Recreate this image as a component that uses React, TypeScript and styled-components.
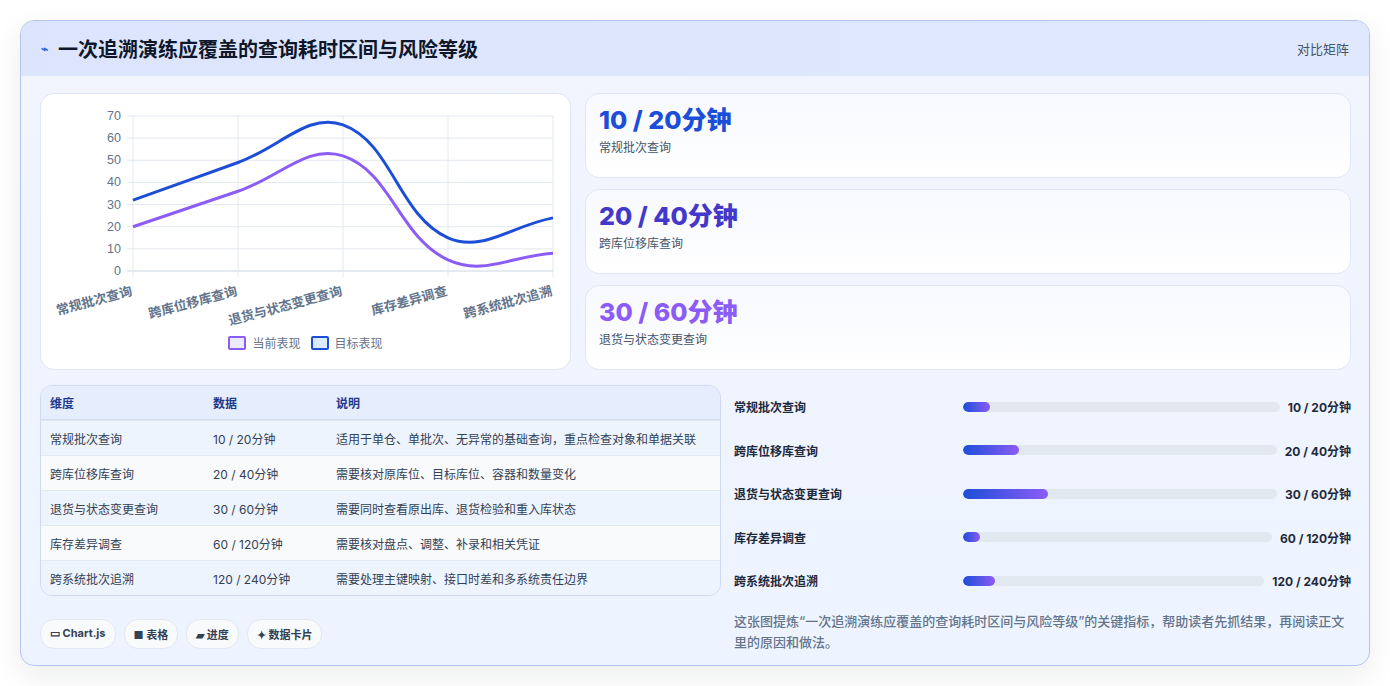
import React from 'react';
import styled, { createGlobalStyle } from 'styled-components';

const GlobalStyle = createGlobalStyle`
  body {
    margin: 0;
    background: #ffffff;
    font-family: Inter, "Noto Sans CJK SC", "Noto Sans", sans-serif;
  }
`;

const labels = ['常规批次查询', '跨库位移库查询', '退货与状态变更查询', '库存差异调查', '跨系统批次追溯'];
const current = [20, 36, 52, 5, 8];
const target = [32, 49, 66, 15, 24];

const rows = [
  { name: '常规批次查询', data: '10 / 20分钟', note: '适用于单仓、单批次、无异常的基础查询，重点检查对象和单据关联', pct: 8.5 },
  { name: '跨库位移库查询', data: '20 / 40分钟', note: '需要核对原库位、目标库位、容器和数量变化', pct: 18 },
  { name: '退货与状态变更查询', data: '30 / 60分钟', note: '需要同时查看原出库、退货检验和重入库状态', pct: 27 },
  { name: '库存差异调查', data: '60 / 120分钟', note: '需要核对盘点、调整、补录和相关凭证', pct: 5.5 },
  { name: '跨系统批次追溯', data: '120 / 240分钟', note: '需要处理主键映射、接口时差和多系统责任边界', pct: 10.5 },
];

const stats = [
  { value: '10 / 20分钟', label: '常规批次查询', color: '#1d4ed8' },
  { value: '20 / 40分钟', label: '跨库位移库查询', color: '#4338ca' },
  { value: '30 / 60分钟', label: '退货与状态变更查询', color: '#8b5cf6' },
];

const X0 = 92;
const X1 = 512;
const Y0 = 177;
const Y70 = 22;
const px = (i: number) => X0 + ((X1 - X0) / 4) * i;
const py = (v: number) => Y0 - ((Y0 - Y70) / 70) * v;

// chart.js style spline (tension 0.4)
function spline(values: number[]) {
  const pts = values.map((v, i) => [px(i), py(v)]);
  const t = 0.4;
  let d = `M${pts[0][0]},${pts[0][1]}`;
  const ctrl = pts.map((p, i) => {
    const prev = pts[Math.max(0, i - 1)];
    const next = pts[Math.min(pts.length - 1, i + 1)];
    const d01 = Math.hypot(p[0] - prev[0], p[1] - prev[1]);
    const d12 = Math.hypot(next[0] - p[0], next[1] - p[1]);
    const s01 = d01 / (d01 + d12 || 1);
    const s12 = d12 / (d01 + d12 || 1);
    const fa = t * s01;
    const fb = t * s12;
    return {
      prev: [p[0] - fa * (next[0] - prev[0]), p[1] - fa * (next[1] - prev[1])],
      next: [p[0] + fb * (next[0] - prev[0]), p[1] + fb * (next[1] - prev[1])],
    };
  });
  for (let i = 1; i < pts.length; i++) {
    const a = ctrl[i - 1].next;
    const b = ctrl[i].prev;
    d += ` C${a[0]},${a[1]} ${b[0]},${b[1]} ${pts[i][0]},${pts[i][1]}`;
  }
  return d;
}

const LineChart: React.FC = () => (
  <svg width="531" height="277" viewBox="0 0 531 277">
    {[0, 10, 20, 30, 40, 50, 60, 70].map((v) => (
      <g key={v}>
        <line x1={X0 - 6} x2={X1} y1={py(v)} y2={py(v)} stroke={v === 0 ? '#cbd5e1' : '#e2e8f0'} />
        <text x={X0 - 12} y={py(v) + 4} fontSize="12.5" fill="#64748b" textAnchor="end" fontFamily="'Liberation Sans', sans-serif">{v}</text>
      </g>
    ))}
    {labels.map((l, i) => (
      <g key={l}>
        <line x1={px(i)} x2={px(i)} y1={Y70} y2={Y0 + 6} stroke="#e2e8f0" />
        <text
          x={px(i)}
          y={Y0 + 24}
          fontSize="13"
          fontWeight="700"
          fill="#64748b"
          textAnchor="end"
          transform={`rotate(-15 ${px(i)} ${Y0 + 24})`}
        >
          {l}
        </text>
      </g>
    ))}
    <path d={spline(current)} fill="none" stroke="#8b5cf6" strokeWidth="3" />
    <path d={spline(target)} fill="none" stroke="#1d4ed8" strokeWidth="3" />
  </svg>
);

const App: React.FC = () => (
  <>
    <GlobalStyle />
    <Page>
      <Card>
        <Header>
          <Title>
            <Bolt>⌁</Bolt>一次追溯演练应覆盖的查询耗时区间与风险等级
          </Title>
          <HeaderTag>对比矩阵</HeaderTag>
        </Header>
        <Body>
          <TopRow>
            <ChartPanel>
              <LineChart />
              <Legend>
                <LegendItem><Swatch color="#8b5cf6" fill="#ede9fe" />当前表现</LegendItem>
                <LegendItem><Swatch color="#1d4ed8" fill="#dbeafe" />目标表现</LegendItem>
              </Legend>
            </ChartPanel>
            <StatList>
              {stats.map((s) => (
                <StatCard key={s.label}>
                  <StatValue color={s.color}>{s.value}</StatValue>
                  <StatLabel>{s.label}</StatLabel>
                </StatCard>
              ))}
            </StatList>
          </TopRow>
          <BottomRow>
            <div>
              <Table>
                <colgroup>
                  <col style={{ width: 163 }} />
                  <col style={{ width: 123 }} />
                  <col />
                </colgroup>
                <thead>
                  <tr>
                    <Th>维度</Th>
                    <Th>数据</Th>
                    <Th>说明</Th>
                  </tr>
                </thead>
                <tbody>
                  {rows.map((r, i) => (
                    <Tr key={r.name} alt={i % 2 === 1}>
                      <Td>{r.name}</Td>
                      <Td>{r.data}</Td>
                      <Td>{r.note}</Td>
                    </Tr>
                  ))}
                </tbody>
              </Table>
              <Tags>
                <Tag>▭ Chart.js</Tag>
                <Tag>■ 表格</Tag>
                <Tag>▰ 进度</Tag>
                <Tag>✦ 数据卡片</Tag>
              </Tags>
            </div>
            <RightBottom>
              <Bars>
                {rows.map((r) => (
                  <BarRow key={r.name}>
                    <BarLabel>{r.name}</BarLabel>
                    <Track>
                      <Fill style={{ width: `${r.pct}%` }} />
                    </Track>
                    <BarValue>{r.data}</BarValue>
                  </BarRow>
                ))}
              </Bars>
              <Summary>
                这张图提炼“一次追溯演练应覆盖的查询耗时区间与风险等级”的关键指标，帮助读者先抓结果，再阅读正文里的原因和做法。
              </Summary>
            </RightBottom>
          </BottomRow>
        </Body>
      </Card>
    </Page>
  </>
);

const Page = styled.div`
  padding: 20px;
  height: 686px;
  box-sizing: border-box;
`;

const Card = styled.div`
  width: 1350px;
  height: 646px;
  box-sizing: border-box;
  border: 1px solid #b6c3ec;
  border-radius: 14px;
  background: linear-gradient(180deg, #f2f5fe 0%, #edf4ff 100%);
  box-shadow: 0 10px 30px rgba(15, 23, 42, 0.08);
  overflow: hidden;
`;

const Header = styled.div`
  height: 55px;
  background: linear-gradient(90deg, #dce5fd, #e0e8fd);
  display: flex;
  align-items: center;
  justify-content: space-between;
  padding: 0 20px;
`;

const Title = styled.h2`
  margin: 0;
  font-size: 20px;
  font-weight: 700;
  color: #0f172a;
  display: flex;
  align-items: center;
  gap: 10px;
`;

const Bolt = styled.span`
  color: #2563eb;
  font-size: 12px;
`;

const HeaderTag = styled.span`
  font-size: 13px;
  color: #475569;
`;

const Body = styled.div`
  display: flex;
  flex-direction: column;
  gap: 15px;
  padding: 17px 18px 0 19px;
`;

const TopRow = styled.div`
  display: grid;
  grid-template-columns: 531px 1fr;
  gap: 14px;
`;

const BottomRow = styled.div`
  display: grid;
  grid-template-columns: 681px 1fr;
  gap: 13px;
`;

const Panel = styled.div`
  background: #ffffff;
  border: 1px solid #dfe6f5;
  border-radius: 14px;
`;

const ChartPanel = styled(Panel)`
  height: 277px;
  box-sizing: border-box;
  position: relative;
  svg {
    position: absolute;
    left: 0;
    top: 0;
  }
`;

const Legend = styled.div`
  position: absolute;
  left: 0;
  right: 0;
  top: 240px;
  display: flex;
  justify-content: center;
  gap: 10px;
`;

const LegendItem = styled.span`
  display: flex;
  align-items: center;
  gap: 6px;
  font-size: 12px;
  color: #64748b;
`;

const Swatch = styled.span<{ color: string; fill: string }>`
  width: 14px;
  height: 10px;
  border: 2px solid ${(p) => p.color};
  background: ${(p) => p.fill};
  border-radius: 2px;
`;

const StatList = styled.div`
  display: flex;
  flex-direction: column;
  gap: 11px;
`;

const StatCard = styled.div`
  height: 85px;
  box-sizing: border-box;
  background: linear-gradient(180deg, #f7f9fe, #ffffff);
  border: 1px solid #dfe6f5;
  border-radius: 14px;
  padding: 10px 13px;
`;

const StatValue = styled.div<{ color: string }>`
  font-size: 25px;
  font-weight: 800;
  color: ${(p) => p.color};
  line-height: 32px;
`;

const StatLabel = styled.div`
  font-size: 12px;
  color: #475569;
  margin-top: 2px;
`;

const Table = styled.table`
  width: 100%;
  table-layout: fixed;
  border-collapse: separate;
  border-spacing: 0;
  border: 1px solid #cfdaf0;
  border-radius: 12px;
  overflow: hidden;
  font-size: 12px;
`;

const Th = styled.th`
  text-align: left;
  background: #e6edfc;
  color: #1e3a8a;
  font-weight: 700;
  height: 33px;
  padding: 0 9px;
  border-bottom: 1px solid #cfdaf0;
`;

const Tr = styled.tr<{ alt: boolean }>`
  background: ${(p) => (p.alt ? '#f8fafc' : '#eef4fe')};
`;

const Td = styled.td`
  height: 34px;
  padding: 0 9px;
  color: #334155;
  border-top: 1px solid #e2e8f0;
  white-space: nowrap;
`;

const Tags = styled.div`
  display: flex;
  gap: 8px;
  margin-top: 23px;
`;

const Tag = styled.span`
  font-size: 11px;
  font-weight: 700;
  color: #334155;
  background: #f8fafc;
  border: 1px solid #e2e8f0;
  border-radius: 14px;
  padding: 6px 9px;
`;

const RightBottom = styled.div`
  display: flex;
  flex-direction: column;
`;

const Bars = styled.div`
  display: flex;
  flex-direction: column;
`;

const BarRow = styled.div`
  height: 43.5px;
  display: flex;
  align-items: center;
  gap: 8px;
`;

const BarLabel = styled.span`
  width: 221px;
  font-size: 12px;
  font-weight: 600;
  color: #1e293b;
`;

const Track = styled.div`
  flex: 1;
  height: 10px;
  border-radius: 5px;
  background: #e2e8f0;
  overflow: hidden;
`;

const Fill = styled.div`
  height: 100%;
  border-radius: 5px;
  background: linear-gradient(90deg, #1d4ed8, #8b5cf6);
`;

const BarValue = styled.span`
  font-size: 12px;
  font-weight: 700;
  color: #1e293b;
  white-space: nowrap;
`;

const Summary = styled.p`
  margin: 8px 0 0;
  font-size: 13px;
  line-height: 21px;
  color: #64748b;
  font-weight: 500;
`;

export default App;
